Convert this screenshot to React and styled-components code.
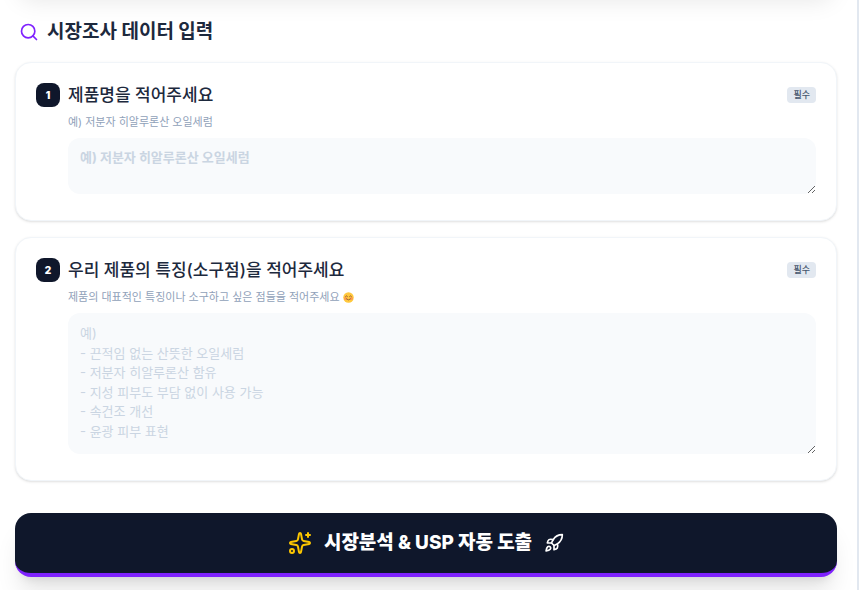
import React from 'react';
import styled, { createGlobalStyle } from 'styled-components';
import { Search, Sparkles, Rocket } from 'lucide-react';

const GlobalStyle = createGlobalStyle`
  *, *::before, *::after {
    box-sizing: border-box;
  }
  body {
    margin: 0;
    background: #fff;
    color: #1d293d;
    font-family: Inter, 'Noto Sans CJK KR', sans-serif;
    overflow: hidden;
  }
`;

const Page = styled.main`
  min-height: 100vh;
  padding: 0 20px 32px 15px;
  border-right: 2px solid #e2e8f0;
  overflow: hidden;
`;

const PreviousPanel = styled.div`
  height: 40px;
  margin: -55px 0 15px;
  border-radius: 16px;
  background: #fff;
  box-shadow: 0 20px 25px -5px rgba(0, 0, 0, .1), 0 8px 10px -6px rgba(0, 0, 0, .1);
`;

const SectionHeader = styled.header`
  display: flex;
  align-items: center;
  gap: 8px;
  padding: 18px 4px 16px;
  color: #7f22fe;

  h2 {
    margin: 0;
    color: #1d293d;
    font-size: 19px;
    font-weight: 700;
    line-height: 28px;
  }
`;

const Form = styled.form`
  display: flex;
  flex-direction: column;
  gap: 16px;
`;

const Card = styled.section`
  display: flex;
  gap: 8px;
  padding: 20px 20px 26px;
  border: 1px solid #f1f5f9;
  border-radius: 16px;
  background: #fff;
  box-shadow: 0 1px 3px rgba(0, 0, 0, .1), 0 1px 2px -1px rgba(0, 0, 0, .1);
`;

const StepNumber = styled.span`
  display: flex;
  flex: none;
  align-items: center;
  justify-content: center;
  width: 24px;
  height: 24px;
  border-radius: 8px;
  background: #0f172b;
  color: #fff;
  font-size: 10px;
  font-weight: 900;
`;

const CardBody = styled.div`
  display: flex;
  flex: 1;
  flex-direction: column;
  min-width: 0;
`;

const TitleRow = styled.div`
  display: flex;
  align-items: center;
  justify-content: space-between;
  height: 24px;
`;

const Label = styled.label`
  color: #1d293d;
  font-size: 17px;
  font-weight: 500;
  line-height: 24px;
`;

const Required = styled.span`
  padding: 0 6px;
  border-radius: 4px;
  background: #e2e8f0;
  color: #45556c;
  font-size: 9px;
  font-weight: 500;
  line-height: 16px;
`;

const Hint = styled.p`
  display: flex;
  align-items: center;
  gap: 3px;
  margin: 8px 0;
  color: #90a1b9;
  font-size: 11px;
  line-height: 15px;
`;

const TextArea = styled.textarea`
  display: block;
  width: 100%;
  padding: 11px 12px 13px;
  border: 0;
  border-radius: 12px;
  outline: none;
  background: #f8fafc;
  color: #1d293d;
  font-family: inherit;
  font-size: 13px;
  font-weight: ${p => p.$bold ? 700 : 400};
  line-height: ${p => p.$bold ? '16px' : 1.5};
  resize: vertical;

  &::placeholder {
    color: #cad5e2;
    opacity: 1;
  }
`;

const SubmitButton = styled.button`
  display: flex;
  align-items: center;
  justify-content: center;
  gap: 12px;
  width: 100%;
  height: 64px;
  margin-top: 16px;
  border: 0;
  border-bottom: 4px solid #7f22fe;
  border-radius: 16px;
  background: #0f172b;
  color: #fff;
  font-family: inherit;
  font-size: 19px;
  font-weight: 800;
  line-height: 28px;
  box-shadow: 0 20px 25px -5px rgba(0, 0, 0, .1), 0 8px 10px -6px rgba(0, 0, 0, .1);
  cursor: pointer;
`;

const Smile = () => (
  <svg width="11" height="11" viewBox="0 0 22 22" aria-hidden="true">
    <circle cx="11" cy="11" r="10.5" fill="#ffc83d" />
    <circle cx="5" cy="13" r="3" fill="#ff9a4d" />
    <circle cx="17" cy="13" r="3" fill="#ff9a4d" />
    <path
      d="M5 9q2-3 4 0M13 9q2-3 4 0M7 14q4 4 8 0"
      fill="none"
      stroke="#7d4533"
      strokeWidth="1.6"
      strokeLinecap="round"
    />
  </svg>
);

const fields = [
  {
    id: 'product-name',
    title: '제품명을 적어주세요',
    hint: '예) 저분자 히알루론산 오일세럼',
    placeholder: '예) 저분자 히알루론산 오일세럼',
    rows: 2,
    bold: true,
  },
  {
    id: 'product-features',
    title: '우리 제품의 특징(소구점)을 적어주세요',
    hint: '제품의 대표적인 특징이나 소구하고 싶은 점들을 적어주세요',
    smile: true,
    placeholder: [
      '예)',
      '- 끈적임 없는 산뜻한 오일세럼',
      '- 저분자 히알루론산 함유',
      '- 지성 피부도 부담 없이 사용 가능',
      '- 속건조 개선',
      '- 윤광 피부 표현',
    ].join('\n'),
    rows: 6,
  },
];

const Field = ({ number, field }) => {
  return (
    <Card>
      <StepNumber>{number}</StepNumber>
      <CardBody>
        <TitleRow>
          <Label htmlFor={field.id}>{field.title}</Label>
          <Required>필수</Required>
        </TitleRow>
        <Hint>
          {field.hint}
          { !!field.smile && <Smile /> }
        </Hint>
        <TextArea
          id={field.id}
          rows={field.rows}
          placeholder={field.placeholder}
          $bold={field.bold}
        />
      </CardBody>
    </Card>
  );
}

const App = () => {
  return (
    <>
      <GlobalStyle />
      <Page>
        <PreviousPanel />
        <SectionHeader>
          <Search size={20} />
          <h2>시장조사 데이터 입력</h2>
        </SectionHeader>
        <Form onSubmit={e => e.preventDefault()}>
          {fields.map((field, i) => (
            <Field key={field.id} number={i + 1} field={field} />
          ))}
          <SubmitButton type="submit">
            <Sparkles size={24} color="#fdc700" />
            <span>시장분석 &amp; USP 자동 도출</span>
            <Rocket size={20} />
          </SubmitButton>
        </Form>
      </Page>
    </>
  );
}

export default App;
